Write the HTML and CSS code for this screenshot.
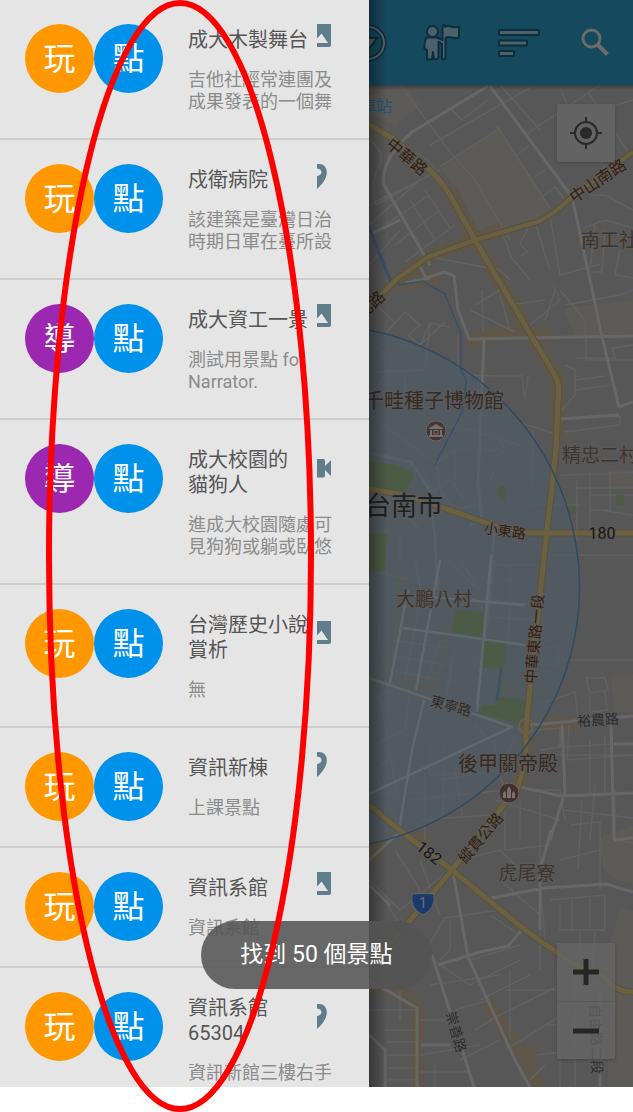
FILE: index.html
```html
<!DOCTYPE html>
<html lang="zh-Hant">
<head>
<meta charset="utf-8">
<meta name="viewport" content="width=device-width, initial-scale=1">
<title>景點列表</title>
<link rel="stylesheet" href="styles.css">
</head>
<body>
<svg class="defs" width="0" height="0" aria-hidden="true">
  <symbol id="i-image" viewBox="0 0 14 26"><path fill-rule="evenodd" d="M0 1H14.500V21Q14.500 24 11.500 24H0V20H11L4.500 10.500L0 15.500Z"/></symbol>
  <symbol id="i-pin" viewBox="0 0 14 26"><path d="M0 1Q9.800 0 9.800 9.500C9.800 16 4 22.500 0 26V13Q4.500 12 4.500 9Q4.500 6 0 5.500Z"/></symbol>
  <symbol id="i-video" viewBox="0 0 14 26"><path d="M0 4H6.500Q8 4 8 6V11L14 5V21L8 15V20.500Q8 22.500 6.500 22.500H0Z"/></symbol>
</svg>
<div class="page">
  <div class="screen">
    <aside class="drawer">
      <ul class="list">
        <li class="item"><div class="badges"><span class="badge play">玩</span><span class="badge spot">點</span></div>
          <div class="info"><div class="head"><h2 class="title">成大木製舞台</h2><svg class="media"><use href="#i-image"/></svg></div><p class="desc">吉他社經常連團及<br>成果發表的一個舞</p></div></li>
        <li class="item"><div class="badges"><span class="badge play">玩</span><span class="badge spot">點</span></div>
          <div class="info"><div class="head"><h2 class="title">戍衛病院</h2><svg class="media"><use href="#i-pin"/></svg></div><p class="desc">該建築是臺灣日治<br>時期日軍在臺所設</p></div></li>
        <li class="item"><div class="badges"><span class="badge guide">導</span><span class="badge spot">點</span></div>
          <div class="info"><div class="head"><h2 class="title">成大資工一景</h2><svg class="media"><use href="#i-image"/></svg></div><p class="desc">測試用景點 for<br>Narrator.</p></div></li>
        <li class="item"><div class="badges"><span class="badge guide">導</span><span class="badge spot">點</span></div>
          <div class="info"><div class="head"><h2 class="title">成大校園的<br>貓狗人</h2><svg class="media"><use href="#i-video"/></svg></div><p class="desc">進成大校園隨處可<br>見狗狗或躺或臥悠</p></div></li>
        <li class="item"><div class="badges"><span class="badge play">玩</span><span class="badge spot">點</span></div>
          <div class="info"><div class="head"><h2 class="title">台灣歷史小說<br>賞析</h2><svg class="media"><use href="#i-image"/></svg></div><p class="desc">無</p></div></li>
        <li class="item"><div class="badges"><span class="badge play">玩</span><span class="badge spot">點</span></div>
          <div class="info"><div class="head"><h2 class="title">資訊新棟</h2><svg class="media"><use href="#i-pin"/></svg></div><p class="desc">上課景點</p></div></li>
        <li class="item"><div class="badges"><span class="badge play">玩</span><span class="badge spot">點</span></div>
          <div class="info"><div class="head"><h2 class="title">資訊系館</h2><svg class="media"><use href="#i-image"/></svg></div><p class="desc">資訊系館</p></div></li>
        <li class="item last"><div class="badges"><span class="badge play">玩</span><span class="badge spot">點</span></div>
          <div class="info"><div class="head"><h2 class="title">資訊系館<br>65304</h2><svg class="media"><use href="#i-pin"/></svg></div><p class="desc">資訊新館三樓右手</p></div></li>
      </ul>
    </aside>

    <main class="pane">
      <header class="bar">
        <button class="tool" aria-label="篩選"><svg width="40" height="40" viewBox="0 0 40 40"><circle cx="21" cy="20" r="16" fill="none" stroke="#0e2d3a" stroke-width="5"/><circle cx="21" cy="20" r="16" fill="none" stroke="#56676f" stroke-width="2"/><path d="M10 15H30L21 27Z" fill="#56676f" stroke="#0e2d3a" stroke-width="2"/></svg></button>
        <button class="tool" aria-label="導覽"><svg width="40" height="40" viewBox="0 0 40 40" fill="#4b626c" stroke="#0e2d3a" stroke-width="2" stroke-linejoin="round"><path d="M19.500 3Q20.500 1 22 2.500V4C26 1 29 6 36 3.500V14.500C30 17 27 12 22.500 15V35Q20.500 38 19 35V21L15.500 18.500V35Q13.500 37 11 36L10 29L9 36Q6 37 4 36V27L1.500 26Q1 17 4 14.500H14L19.500 17Z"/><circle cx="9.500" cy="8.500" r="5.500"/></svg></button>
        <button class="tool" aria-label="排序"><svg width="44" height="40" viewBox="0 0 44 40" fill="#4b626c" stroke="#0e2d3a" stroke-width="2"><rect x="2" y="7" width="40" height="5" rx="1"/><rect x="2" y="17.500" width="28" height="5" rx="1"/><rect x="2" y="28" width="15" height="5" rx="1"/></svg></button>
        <button class="tool" aria-label="搜尋"><svg width="30" height="30" viewBox="0 0 30 30" fill="none" stroke="#6c6a6a" stroke-width="3"><circle cx="11.500" cy="10.500" r="8.500"/><path d="M17.500 16.500L27.500 26.500" stroke-width="4"/></svg></button>
      </header>
      <section class="map" aria-label="地圖">
        <svg class="canvas" viewBox="369 85 264 1002" preserveAspectRatio="xMinYMin slice">
          <rect x="369" y="85" width="264" height="1002" fill="#575757"/>
          <g fill="#5c5b57">
            <path d="M442 168L500 128L552 209Q540 220 530 222L475 238L455 190Z"/><path d="M369 95L404 85L420 105L395 125L369 115Z"/>
            <path d="M564 308L633 300V338H575Z"/><path d="M608 470H633V488H608Z"/><path d="M611 677L633 675V712H615Z"/>
            <path d="M600 838Q620 830 633 826V884Q605 880 602 862Z"/><path d="M621 907L633 911V1087H608V1040L612 1000L605 960Z"/>
          </g>
          <g fill="none" stroke="#5f564a" stroke-width="14" stroke-linejoin="round">
            <path d="M450 190L475 240L502 285L532 337L559 380V440"/><path d="M408 273L430 256L475 240L502 229"/><path d="M388 285L440 278"/><path d="M467 342L500 332L552 334"/>
            <path d="M405 573L390 670L369 682M446 625L435 690L395 680"/><path d="M505 690H528V740L520 787"/><path d="M535 724H578"/><path d="M387 830L370 862M402 830L430 845"/><path d="M369 985L393 989L417 1005V1087M487 1002L525 1060L540 1087M515 1052H537"/>
          </g>
          <g fill="none" stroke="#616161" stroke-width="1.500">
            <path d="M404 90L450 152L475 180M440 167L500 128M475 180L510 240M430 145L500 105L530 88M450 108L462 120L488 100M497 126L550 208M517 155L530 145M530 180L545 170M538 200L555 187L565 200M525 135L600 85M560 88L583 140L615 180M588 92L630 155M589 195L605 195L633 210M500 85L540 130M570 120L633 100"/>
            <path d="M369 140Q385 150 380 165Q370 180 376 205L420 180M369 225L420 180L440 170M385 225L430 195M395 245L440 210M405 262L455 225M400 150Q422 150 436 170M410 200L435 240M425 190L450 228M369 205L410 185M369 265L400 230M435 258L500 270L510 280M500 228L512 258L530 280M520 256L528 252L520 244L532 220M535 222L550 270M550 215L560 275L600 264M583 228L605 220L633 228M595 225L590 270M605 230L602 272H590M620 250L615 275L633 278"/>
            <path d="M372 300L395 323L405 312L420 325L408 335L420 345L430 323L450 327M395 323L386 333M420 345L445 322M430 323L425 370L372 372M392 357L388 385M400 345L420 350M405 370V400M369 340L385 355V375L372 395M458 335V375L500 376H522L525 400M480 376L475 400M528 376L525 398M483 376V415M470 310L515 332M475 305L500 290M483 330L482 290M510 330L500 295M510 305L545 300M530 325L560 300L553 285M545 320L555 290M560 290L585 320V338M565 305L620 295L633 290M586 338V360L633 360M575 358H615L612 348L633 345M565 365L575 370V395L562 410M575 380L605 376M575 390L612 385M620 416V425L565 432"/>
            <path d="M370 415L436 463L455 450L500 450M400 400L440 425L470 430L520 445M436 463L443 505M455 450V490M510 420L560 435M533 430L532 485M575 488H633M530 505H580M560 475L605 474L633 472M577 480V540M590 472V535M610 472V510H590M600 510L633 515M590 495H633M420 500L450 480L465 500M440 490L455 510L475 505M380 505L415 470M425 475L440 500M369 520L395 505L420 530M385 530V555M400 531V560M545 555H633M490 460L505 450L500 440M495 470L490 480H500"/>
            <path d="M415 560L425 610M447 560L478 590M460 560L480 590M369 570L410 580M490 565H545M485 580H540M490 600L535 605M487 617L535 620M510 565V610L508 640M495 560L490 605M405 600L390 680M420 600L405 680M440 640L428 680M455 650L445 700M390 640L450 648M390 655L445 665M388 670L440 680M380 625L375 675M450 660H480V680H450ZM535 647H558V665H535M558 660H633M536 705L575 692L578 720M586 678H605L608 690L590 693ZM590 695V712L607 710L605 690M536 730L560 728V747L540 750M562 747L633 743M540 755H633M569 725L567 760L633 755M590 740V795M605 735V795"/>
            <path d="M369 700L395 690M380 695L398 800M390 700L369 720M375 745L405 730L410 690M369 775L400 750M430 745V775L480 772M443 745V815M425 775V840M455 770L462 815M475 725L495 745M515 735L505 760M495 740V770M369 760L400 830M440 780L500 770M410 800L505 790L500 775M420 820L490 815M370 790L395 795M495 800L560 820M505 795V850L550 845M520 800V840M540 795V870M525 790L560 790L565 820M565 810L633 818M570 825L600 822V890M582 800L578 870M560 860L600 850M595 785L590 840M615 790V840L633 843M460 860L500 850L530 880"/>
            <path d="M369 880L400 910L450 870M385 900L420 960L445 918L500 910M395 850L420 890L410 930M420 860L440 915M450 920V950L440 960M490 915L520 935M500 880L540 915V970M425 955L470 985L520 960M430 985L500 975M470 960L520 945M510 970V1040M480 1000L530 975M490 1020L560 985M505 1050L570 1010M505 990H560V1050M545 1025H580M560 970V1087M575 965V1087M537 1055L580 1050M400 990V1020M369 1010H417M385 1030H417M387 1042H417M387 1055H417M387 1068H417M387 1080H417M420 1020H450M420 1055L480 1045M435 1065V1087M420 1072H470M455 1010L490 1000M475 1030L495 1018M460 1060L500 1040M530 1080L545 1065M550 900L605 895V930H560V905M572 898V930M590 898V928M540 880L545 940M580 930V980L633 990M595 930L592 970"/>
          </g>
          <g fill="none" stroke="#676767" stroke-width="3" stroke-linejoin="round">
            <path d="M488 86L412 132Q380 160 384 185L423 253L430 265"/><path d="M490 86L572 197L590 280L602 337L619 407M619 407L633 402M560 419L619 415"/><path d="M418 262L426 278L444 272L454 276L458 310L469 339L633 336M484 340L478 480L482 520L470 525M369 453L411 462L430 490L435 540L438 590M495 525L487 620L477 705M430 278L405 283M369 235L400 220"/>
          </g>
          <circle cx="317.500" cy="587" r="262" fill="#4d5c65" fill-opacity=".62"/>
          <g fill="#4b5b45">
            <path d="M369 461Q405 464 414 474L406 491L369 492Z"/><path d="M369 533H387L385 571L369 573Z"/><path d="M456 610L483 612V637L451 632Z"/><path d="M484 641L507 643L500 698L526 700V726L478 713L483 705H495L500 668H483Z"/><path d="M498 487L505 485V501L498 498ZM567 506H576V514H567ZM616 495H624V505H616ZM369 1050L372 1055L369 1060Z"/>
          </g>
          <path d="M369 226L382 260L391 280L400 285L423 281L445 294L461 334V370L466 380L463 410L440 455L435 465" fill="none" stroke="#38506b" stroke-width="1.500"/><path d="M501 667L497 700" stroke="#38506b" stroke-width="2"/><path d="M369 228L391 282" stroke="#38506b" stroke-width="3"/>
          <g fill="none" stroke="#626b70" stroke-width="2.500" stroke-opacity=".8" stroke-linejoin="round">
            <path d="M491 555L487 600L477 712M405 595L525 605M403 628L525 645M390 683L408 590M416 690L440 560M369 678L512 727L369 794M424 700L412 750L399 830"/>
          </g>
          <g fill="none" stroke="#676767" stroke-width="3" stroke-linejoin="round">
            <path d="M530 725L633 716M562 725L565 792L550 840M520 787L561 796L633 793M611 725L614 840M614 744H633M369 860L402 830M491 898L545 888L606 884L633 892M551 830L540 870V930M453 872L468 957L515 1060L530 1087M438 965L480 952L508 946L522 930M432 955L474 1087M369 885L390 905M369 980L417 1008V1087M369 1035L385 1050V1087M614 840L633 838M600 990V1087M421 1045H450"/>
          </g>
          <g fill="none" stroke="#595241" stroke-width="7" stroke-linejoin="round" stroke-linecap="round">
            <path d="M366 123L392 138L422 163Q440 178 450 195L475 240L532 337L555 375Q560 385 558 400L556 450L547 530L526 727V760L518 787L452 870L408 923L369 965"/><path d="M633 152L572 197Q545 222 530 224L475 240L428 257L398 278L369 306M369 489L410 496L492 525L525 533H633M369 805L402 832L452 870L525 930L572 963L605 977Q615 992 633 992"/>
          </g>
          <g fill="none" stroke="#6b6141" stroke-width="5" stroke-linejoin="round">
            <path d="M366 123L392 138L422 163Q440 178 450 195L475 240L532 337L555 375Q560 385 558 400L556 450L547 530L526 727V760L518 787L452 870L408 923L369 965"/><path d="M369 489L410 496L492 525L525 533H633M369 805L402 832L452 870L525 930L572 963L605 977Q615 992 633 992"/><path d="M633 152L572 197Q545 222 530 224L475 240L428 257L398 278L369 306" stroke-width="4"/><circle cx="526" cy="726" r="7" stroke-width="2"/>
          </g>
          <circle cx="317.500" cy="587" r="262" fill="none" stroke="#2e4a64" stroke-width="1.500"/>
          <g class="labels">
            <text class="s16 water start" x="360" y="112">車站</text>
            <text class="s16 road" transform="translate(407 157) rotate(40)">中華路</text>
            <text class="s16 road" transform="translate(598 181) rotate(-34)">中山南路</text>
            <text class="s16 road" transform="translate(371 305) rotate(-44)">北路</text>
            <text class="s19 place start" x="581" y="247">南工社區</text>
            <text class="s20 poi end" x="504" y="408">千畦種子博物館</text>
            <text class="s19 place start" x="562" y="462">精忠二村</text>
            <text class="s26 city end" x="443" y="515">台南市</text>
            <text class="s14 road" transform="translate(505 531) rotate(8)">小東路</text>
            <text class="s16 num" x="602" y="539">180</text>
            <text class="s19 place" x="434" y="606">大鵬八村</text>
            <text class="s15 road" transform="translate(535 639) rotate(-85)">中華東路一段</text>
            <text class="s14 street" transform="translate(451 706) rotate(16)">東寧路</text>
            <text class="s14 street" transform="translate(598 720) rotate(-4)">裕農路</text>
            <text class="s20 poi" x="508" y="771">後甲關帝殿</text>
            <text class="s16 num" transform="translate(429 853) rotate(38)">182</text>
            <text class="s15 road" transform="translate(481 838) rotate(-50)">縱貫公路</text>
            <text class="s19 place" x="527" y="880">虎尾寮</text>
            <text class="s14 faint" transform="translate(398 933) rotate(-50)">三段</text>
            <text class="s14 street" transform="translate(456 1032) rotate(74)">崇善路</text>
            <text class="s14 street" transform="translate(596 1039) rotate(88)">自由路二段</text>
          </g>
          <circle cx="436" cy="431" r="10" fill="#44352f" stroke="#626668"/><path d="M429 428L436 424L443 428V429H429ZM431 430V434M430 430H432V435H430ZM440 430H442V435H440ZM429 435H443V437H429Z" fill="#74706d"/><rect x="434" y="430.500" width="4" height="3.500" fill="none" stroke="#74706d"/>
          <circle cx="509" cy="793" r="10" fill="#44302a" stroke="#656565"/><path d="M503 798V793L505 791L506 793V798ZM507 798V790L509 786L511 790V798ZM512 798V793L514 791L515 793V798Z" fill="#77716f"/>
          <path d="M412 894Q423 893 434 894Q436 909 423 915Q410 909 412 894Z" fill="#1a3a69" stroke="#686868"/><text class="s14 shield" x="423" y="908">1</text>
        </svg>
        <button class="locate" aria-label="我的位置"><svg width="34" height="34" viewBox="0 0 34 34"><circle cx="17" cy="17" r="11" fill="none" stroke="#292929" stroke-width="2"/><circle cx="17" cy="17" r="6" fill="#292929"/><path d="M17 1V6M17 28V33M1 17H6M28 17H33" stroke="#292929" stroke-width="2"/></svg></button>
        <div class="zoom">
          <button class="step" aria-label="放大"><svg width="26" height="26" viewBox="0 0 26 26"><path d="M0 13H26M13 0V26" stroke="#262626" stroke-width="5"/></svg></button>
          <button class="step" aria-label="縮小"><svg width="26" height="26" viewBox="0 0 26 26"><path d="M0 13H26" stroke="#262626" stroke-width="5"/></svg></button>
        </div>
      </section>
    </main>
    <div class="toast" role="status">找到 50 個景點</div>
  </div>
  <svg class="ring" width="268" height="1112" viewBox="0 0 268 1112" aria-hidden="true"><ellipse cx="134" cy="556" rx="131" ry="553" fill="none" stroke="#ff0000" stroke-width="6"/></svg>
</div>
</body>
</html>
```
FILE: styles.css
```css
* { box-sizing: border-box; }
body { margin: 0; background: #fff; font-family: Roboto, "Noto Sans CJK TC", sans-serif; }
.defs { position: absolute; }
.page { position: relative; padding-bottom: 25px; overflow: hidden; }
.screen { position: relative; display: grid; grid-template-columns: 369px minmax(0, 1fr); }

.drawer { background: #e5e5e5; }
.list { margin: 0; padding: 0; list-style: none; }
.item { display: flex; gap: 25px; min-height: 120px; padding: 24px 25px 25px; border-bottom: 2px solid #cdcdcd; }
.item.last { min-height: 119px; padding-bottom: 0; border-bottom: 0; }
.badges { display: flex; flex: none; }
.badge { display: flex; align-items: center; justify-content: center; width: 69px; height: 69px; border-radius: 50%; color: #fff; font-size: 32px; line-height: 32px; }
.play { background: #ff9800; }
.guide { background: #9c27b0; }
.spot { background: #0091ea; }
.info { flex: 1; min-width: 0; padding-top: 4px; }
.head { display: flex; align-items: center; justify-content: space-between; margin-bottom: 16px; }
.title { margin: 0; color: #555; font-size: 20px; font-weight: 400; line-height: 25px; white-space: nowrap; }
.media { flex: none; width: 14px; height: 26px; margin: -7px 13px 3px 0; fill: #607d8b; }
.desc { margin: 0; color: #8b8b8b; font-size: 18px; line-height: 22px; white-space: nowrap; }

.pane { position: relative; display: flex; flex-direction: column; min-width: 0; overflow: hidden; }
.pane::after { content: ""; position: absolute; inset: 0 auto 0 0; width: 18px; background: linear-gradient(90deg, rgba(0, 0, 0, .35), transparent); pointer-events: none; }
.bar { display: flex; justify-content: flex-end; height: 85px; background: #15495d; }
.tool { display: flex; flex: none; align-items: center; justify-content: center; width: 76px; padding: 0; border: 0; background: none; }
.map { position: relative; flex: 1; background: #575757; }
.map::before { content: ""; position: absolute; z-index: 1; inset: 0 0 auto; height: 5px; background: linear-gradient(rgba(0, 0, 0, .3), transparent); }
.canvas { position: absolute; inset: 0; width: 100%; height: 100%; }
.labels text { text-anchor: middle; dominant-baseline: auto; paint-order: stroke; stroke: #5b5b5b; stroke-width: 2px; }
.labels text[transform] { dominant-baseline: central; }
.labels .start { text-anchor: start; }
.labels .end { text-anchor: end; }
.s14 { font-size: 14px; }
.s15 { font-size: 15px; }
.s16 { font-size: 16px; }
.s19 { font-size: 19px; }
.s20 { font-size: 20px; }
.s26 { font-size: 26px; }
.road { fill: #341e0c; }
.street { fill: #2c2c2c; }
.place { fill: #3e332d; }
.poi { fill: #352a26; }
.city { fill: #1d2022; }
.num { fill: #161616; }
.water { fill: #245670; }
.faint { fill: #4b4137; }
.shield { fill: #717171; text-anchor: middle; }

.locate, .step { display: flex; align-items: center; justify-content: center; width: 58px; height: 58px; padding: 0; border: 0; background: rgba(101, 101, 101, .85); }
.locate { position: absolute; top: 19px; right: 18px; border-radius: 2px; box-shadow: 0 1px 3px #444; }
.zoom { position: absolute; right: 18px; bottom: 28px; border-radius: 2px; box-shadow: 0 1px 3px #444; }
.step { background: rgba(101, 101, 101, .75); }
.step + .step { border-top: 1px solid #5a5a5a; }

.toast { position: absolute; left: 201px; bottom: 98px; display: flex; align-items: center; justify-content: center; width: 231px; height: 68px; border-radius: 34px; background: rgba(84, 84, 84, .87); color: #fff; font-size: 23px; line-height: 30px; white-space: nowrap; }
.ring { position: absolute; left: 46px; top: 0; pointer-events: none; }
```
